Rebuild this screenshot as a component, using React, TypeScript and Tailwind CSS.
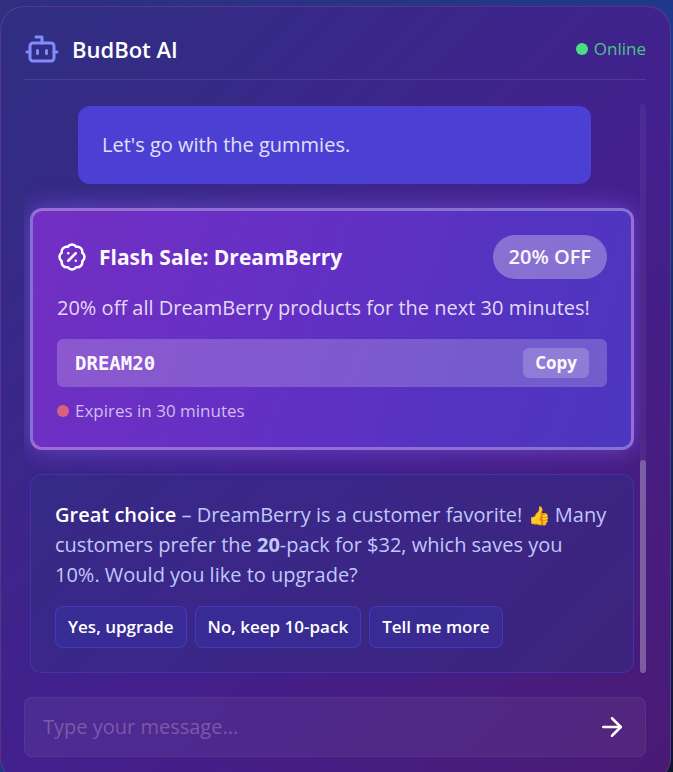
import { ArrowRight, BadgePercent, Bot } from "lucide-react";
import { useState } from "react";

const quickReplies = ["Yes, upgrade", "No, keep 10-pack", "Tell me more"];

const ChatHeader = () => (
  <header className="flex items-center justify-between border-b border-white/10 pb-3">
    <div className="flex items-center gap-3">
      <Bot className="h-9 w-9 text-[#818cf8]" aria-hidden />
      <h1 className="text-[22px] leading-9 font-semibold text-white">BudBot AI</h1>
    </div>
    <div className="flex items-center gap-1.5 text-[17px] leading-6 text-[#4cc38a]">
      <span className="h-3 w-3 rounded-full bg-[#4ade80]" />
      Online
    </div>
  </header>
);

const PromoCard = ({ code }: { code: string }) => {
  const [copied, setCopied] = useState(false);

  const copy = () => {
    navigator.clipboard?.writeText(code);
    setCopied(true);
  };

  return (
    <section className="rounded-xl border-3 border-white/30 bg-[linear-gradient(110deg,#732fc3_0%,#6330c4_45%,#5234c0_78%,#4c36c0_100%)] p-6 shadow-[0_0_24px_rgba(139,92,246,0.6)]">
      <div className="flex items-center justify-between">
        <div className="flex items-center gap-3">
          <BadgePercent className="h-[30px] w-[30px] text-white" aria-hidden />
          <h2 className="text-[21px] leading-8 font-bold text-[#fbf7ff]">Flash Sale: DreamBerry</h2>
        </div>
        <span className="rounded-full bg-white/30 px-4 py-1.5 text-[20px] leading-8 font-semibold text-[#fbf7ff]">
          20% OFF
        </span>
      </div>
      <p className="mt-3.5 text-[20px] leading-[30px] text-[#e4d9f5]">
        20% off all DreamBerry products for the next 30 minutes!
      </p>
      <div className="mt-4 flex h-12 items-center justify-between rounded-md bg-white/20 px-[18px]">
        <code className="font-['DejaVu_Sans_Mono',monospace] text-[19px] font-bold text-[#fbf7ff]">{code}</code>
        <button
          type="button"
          onClick={copy}
          className="rounded-md bg-white/20 px-3 text-[17px] leading-[30px] font-bold text-[#fbf7ff]"
        >
          {copied ? "Copied" : "Copy"}
        </button>
      </div>
      <div className="mt-3 flex items-center gap-1.5 text-[17px] leading-6 text-[#d0bcee]">
        <span className="h-3 w-3 rounded-full bg-[#d9607f]" />
        Expires in 30 minutes
      </div>
    </section>
  );
};

const BotMessage = () => (
  <div className="rounded-xl border border-[#4f46e5]/40 bg-[#312e81]/50 px-6 pt-[25px] pb-6 text-[20px] leading-[30px] text-[#c0c8fa]">
    <p>
      <strong className="font-semibold text-white">Great choice</strong> – DreamBerry is a customer favorite!{" "}
      <span className="text-[18px]">👍</span> Many customers prefer the{" "}
      <strong className="font-bold">20</strong>-pack for $32, which saves you 10%. Would you like to upgrade?
    </p>
    <div className="mt-4 flex flex-wrap gap-2">
      {quickReplies.map((reply) => (
        <button
          key={reply}
          type="button"
          className="rounded-lg border border-[#4f46e5]/50 bg-[#3730a3]/50 px-3 py-1.5 text-[17px] leading-7 font-semibold text-white"
        >
          {reply}
        </button>
      ))}
    </div>
  </div>
);

export default function App() {
  return (
    <main className="h-screen overflow-hidden bg-[linear-gradient(135deg,#312e81_0%,#1e3a8a_50%,#0f172a_100%)] pt-1.5 pr-0.5 font-['Open_Sans','Noto_Sans',sans-serif]">
      <div className="rounded-3xl border border-white/10 bg-[linear-gradient(135deg,#2f2f82_0%,#43208e_55%,#4a1a74_100%)] p-6 pl-[23px]">
        <ChatHeader />

        <div className="mt-6 flex">
          <div className="flex min-w-0 flex-1 flex-col gap-6 overflow-hidden pt-0.5 pr-1.5 pl-1.5">
            <div className="ml-12 w-[85%] rounded-xl bg-[#4c40d4] p-6 text-[20px] leading-[30px] text-[#e0e0fd]">
              Let's go with the gummies.
            </div>
            <PromoCard code="DREAM20" />
            <BotMessage />
          </div>
          <div className="flex w-1.5 flex-col justify-end rounded-full bg-white/5">
            <div className="h-3/8 rounded-full bg-white/25" />
          </div>
        </div>

        <form
          className="mt-6 flex items-center rounded-lg border border-white/5 bg-white/5 px-[18px]"
          onSubmit={(e) => e.preventDefault()}
        >
          <input
            type="text"
            aria-label="Message"
            placeholder="Type your message..."
            className="min-w-0 flex-1 bg-transparent py-3.5 text-[20px] leading-[30px] text-white outline-none placeholder:text-[#7d58a8]"
          />
          <button type="submit" aria-label="Send" className="text-white">
            <ArrowRight className="h-[30px] w-[30px]" aria-hidden />
          </button>
        </form>
      </div>
    </main>
  );
}
